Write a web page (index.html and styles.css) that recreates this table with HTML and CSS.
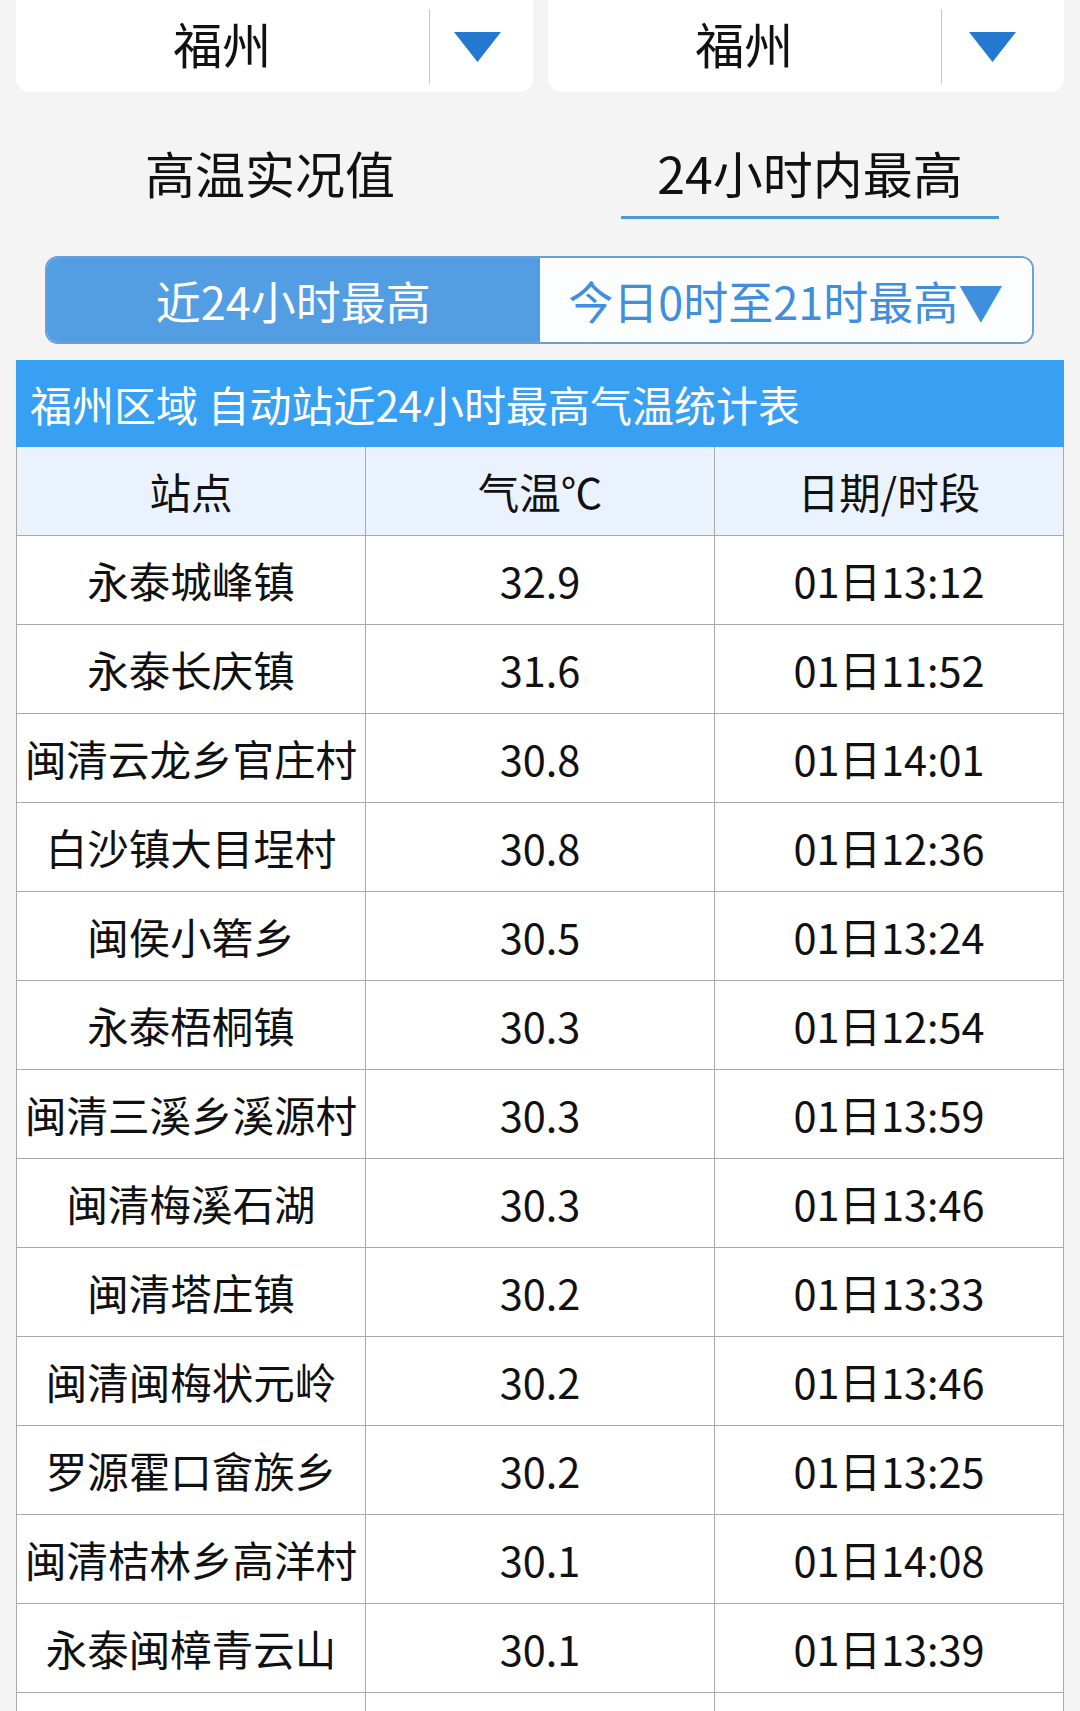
FILE: index.html
```html
<!DOCTYPE html>
<html lang="zh-CN">
<head>
<meta charset="utf-8">
<title>福州 高温实况值</title>
<link rel="stylesheet" href="styles.css">
</head>
<body>
<div class="page">
  <div class="selectors">
    <div class="select-card">
      <div class="select-label">福州</div>
      <div class="select-divider"></div>
      <div class="select-arrow"><svg width="47" height="30" viewBox="0 0 47 30"><polygon points="0,0 47,0 23.5,30" fill="#2478cf"/></svg></div>
    </div>
    <div class="select-card">
      <div class="select-label">福州</div>
      <div class="select-divider"></div>
      <div class="select-arrow wide"><svg width="47" height="30" viewBox="0 0 47 30"><polygon points="0,0 47,0 23.5,30" fill="#2478cf"/></svg></div>
    </div>
  </div>

  <div class="tabs">
    <div class="tab"><span class="tab-text">高温实况值</span></div>
    <div class="tab"><span class="tab-text active">24小时内最高</span></div>
  </div>

  <div class="segment">
    <div class="seg-item seg-on">近24小时最高</div>
    <div class="seg-item seg-off">今日0时至21时最高▼</div>
  </div>

  <div class="title-bar">福州区域 自动站近24小时最高气温统计表</div>

  <table class="stats">
    <thead>
      <tr><th>站点</th><th>气温℃</th><th>日期/时段</th></tr>
    </thead>
    <tbody>
      <tr><td>永泰城峰镇</td><td>32.9</td><td>01日13:12</td></tr>
      <tr><td>永泰长庆镇</td><td>31.6</td><td>01日11:52</td></tr>
      <tr><td>闽清云龙乡官庄村</td><td>30.8</td><td>01日14:01</td></tr>
      <tr><td>白沙镇大目埕村</td><td>30.8</td><td>01日12:36</td></tr>
      <tr><td>闽侯小箬乡</td><td>30.5</td><td>01日13:24</td></tr>
      <tr><td>永泰梧桐镇</td><td>30.3</td><td>01日12:54</td></tr>
      <tr><td>闽清三溪乡溪源村</td><td>30.3</td><td>01日13:59</td></tr>
      <tr><td>闽清梅溪石湖</td><td>30.3</td><td>01日13:46</td></tr>
      <tr><td>闽清塔庄镇</td><td>30.2</td><td>01日13:33</td></tr>
      <tr><td>闽清闽梅状元岭</td><td>30.2</td><td>01日13:46</td></tr>
      <tr><td>罗源霍口畲族乡</td><td>30.2</td><td>01日13:25</td></tr>
      <tr><td>闽清桔林乡高洋村</td><td>30.1</td><td>01日14:08</td></tr>
      <tr><td>永泰闽樟青云山</td><td>30.1</td><td>01日13:39</td></tr>
      <tr><td></td><td></td><td></td></tr>
    </tbody>
  </table>
</div>
</body>
</html>
```

FILE: styles.css
```css
html, body {
  margin: 0;
  padding: 0;
  height: 1711px;
  overflow: hidden;
  background: #f4f4f4;
}

.page {
  width: 1080px;
  font-family: "Noto Sans CJK SC", "Noto Sans", sans-serif;
  color: #111;
}

.selectors {
  display: flex;
  gap: 15px;
  padding: 0 16px;
}

.select-card {
  flex: 1;
  height: 92px;
  background: #fff;
  border-radius: 0 0 14px 14px;
  display: flex;
  align-items: center;
}

.select-label {
  flex: 1;
  text-align: center;
  font-size: 49px;
  line-height: 60px;
  padding-bottom: 6px;
}

.select-divider {
  width: 1px;
  height: 75px;
  background: #c8c8c8;
}

.select-arrow {
  width: 103px;
  box-sizing: border-box;
  display: flex;
  justify-content: flex-start;
  align-items: center;
  padding-left: 24px;
  padding-top: 2px;
}

.select-arrow.wide {
  width: 122px;
  padding-left: 27px;
}

.select-arrow svg {
  display: block;
}

.tabs {
  display: flex;
  padding-top: 50px;
}

.tab {
  flex: 1;
  display: flex;
  justify-content: center;
}

.tab-text {
  font-size: 50px;
  line-height: 60px;
  padding: 0 36px 14px;
  border-bottom: 3px solid transparent;
}

.tab-text.active {
  border-bottom-color: #4d9ad6;
}

.segment {
  display: flex;
  margin: 37px 46px 0 45px;
  height: 88px;
  border: 2px solid #6a9fd8;
  border-radius: 13px;
  overflow: hidden;
  box-sizing: border-box;
}

.seg-item {
  flex: 1;
  display: flex;
  align-items: center;
  justify-content: center;
  font-size: 45px;
  white-space: nowrap;
}

.seg-on {
  background: #539ee3;
  color: #fff;
}

.seg-off {
  background: #fcfdff;
  color: #3f8fdc;
}

.title-bar {
  margin: 16px 16px 0;
  height: 87px;
  background: #38a0f3;
  color: #fff;
  font-size: 42px;
  display: flex;
  align-items: center;
  padding-left: 14px;
}

.stats {
  margin: 0 16px;
  width: 1048px;
  border-collapse: collapse;
  table-layout: fixed;
  background: #fff;
}

.stats th,
.stats td {
  border: 1px solid #a8a8a8;
  text-align: center;
  font-weight: normal;
  font-size: 41.5px;
  line-height: 56px;
  padding: 0;
  white-space: nowrap;
}

.stats thead th {
  background: #eaf2fd;
  height: 88px;
  border-top: none;
}

.stats td {
  height: 88px;
}
```
